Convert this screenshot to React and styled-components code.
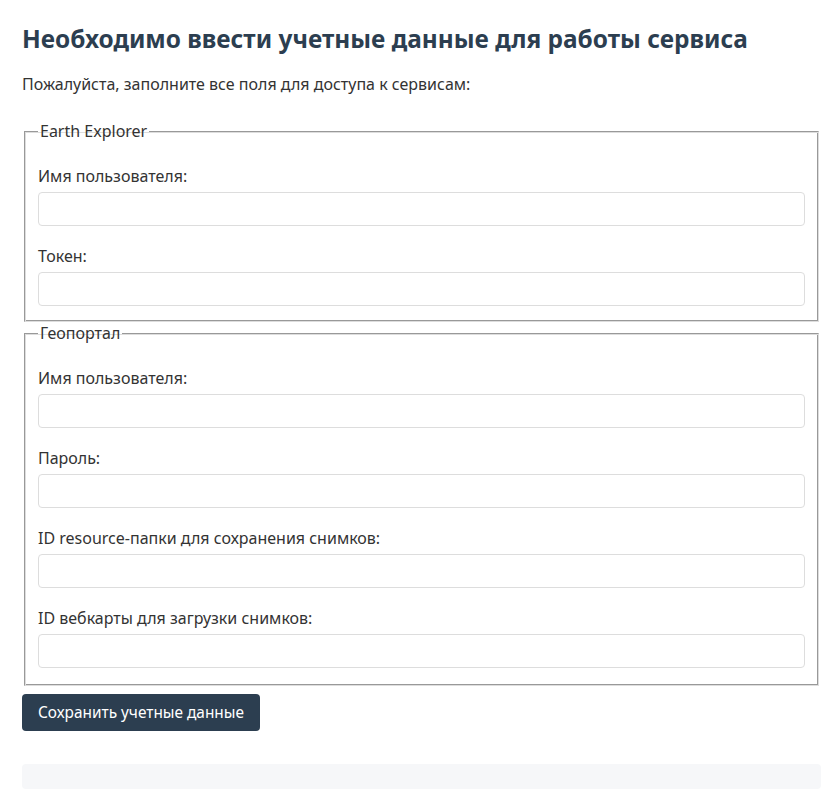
import React from "react";
import styled, { createGlobalStyle } from "styled-components";

const Global = createGlobalStyle`
  html, body { margin: 0; padding: 0; background: #fff; }
  body { font-family: "Noto Sans", "Open Sans", sans-serif; color: #333; font-size: 16px; }
`;

const Page = styled.div`
  width: 799px;
  padding: 21px 0 0 22px;
`;

const Title = styled.h1`
  margin: 0;
  font-size: 24.4px;
  line-height: 36px;
  font-weight: 700;
  color: #2c3e50;
`;

const Lead = styled.p`
  margin: 15px 0 26px;
  font-size: 16px;
  line-height: 24px;
  color: #333;
`;

const Form = styled.form`
  display: flex;
  flex-direction: column;
`;

const Set = styled.fieldset`
  margin: 0 2px 2px;
  border: 1px solid;
  border-color: #999 #ddd #ddd #999;
  box-shadow: inset 1px 1px 0 #ddd, inset -1px -1px 0 #999;
  padding: 6px 13px 15px;
  min-width: 0;
  &:last-of-type {
    margin-bottom: 8px;
    padding-bottom: 17px;
  }
`;

const Legend = styled.legend`
  padding: 0 2px;
  font-size: 16px;
  line-height: 18px;
  color: #333;
`;

const Group = styled.div`
  display: flex;
  flex-direction: column;
  margin-top: 18px;
`;

const Label = styled.label`
  font-size: 16px;
  line-height: 24px;
  margin-bottom: 4px;
  color: #333;
`;

const Input = styled.input`
  box-sizing: border-box;
  height: 34px;
  width: 100%;
  border: 1px solid #ddd;
  border-radius: 4px;
  padding: 6px 10px;
  font: inherit;
  background: #fff;
`;

const Button = styled.button`
  align-self: flex-start;
  background: #2c3e50;
  color: #fff;
  border: none;
  border-radius: 4px;
  height: 37px;
  padding: 0 16px;
  font-family: "Noto Sans", sans-serif;
  font-size: 15.4px;
  cursor: pointer;
`;

const Footer = styled.div`
  margin-top: 33px;
  height: 25px;
  background: #f6f7f9;
  border-radius: 4px;
`;

const Field = ({ label }) => (
  <Group>
    <Label>{label}</Label>
    <Input type="text" />
  </Group>
);

export default function App() {
  return (
    <>
      <Global />
      <Page>
        <Title>Необходимо ввести учетные данные для работы сервиса</Title>
        <Lead>Пожалуйста, заполните все поля для доступа к сервисам:</Lead>
        <Form onSubmit={(e) => e.preventDefault()}>
          <Set>
            <Legend>Earth Explorer</Legend>
            <Field label="Имя пользователя:" />
            <Field label="Токен:" />
          </Set>
          <Set>
            <Legend>Геопортал</Legend>
            <Field label="Имя пользователя:" />
            <Field label="Пароль:" />
            <Field label="ID resource-папки для сохранения снимков:" />
            <Field label="ID вебкарты для загрузки снимков:" />
          </Set>
          <Button type="submit">Сохранить учетные данные</Button>
        </Form>
        <Footer />
      </Page>
    </>
  );
}
